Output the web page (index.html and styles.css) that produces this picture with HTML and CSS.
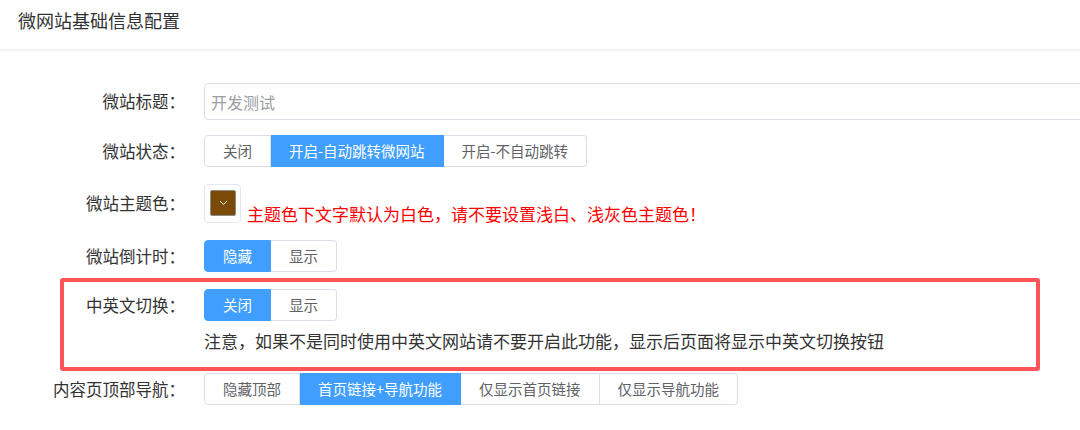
FILE: index.html
```html
<!DOCTYPE html>
<html lang="zh-CN">
<head>
<meta charset="utf-8">
<title>微网站基础信息配置</title>
<link rel="stylesheet" href="styles.css">
</head>
<body>
<div class="page">
  <div class="header">微网站基础信息配置</div>
  <div class="form">
    <div class="row row-input">
      <div class="label">微站标题：</div>
      <div class="control">
        <input class="text-input" type="text" placeholder="开发测试">
      </div>
    </div>
    <div class="row">
      <div class="label">微站状态：</div>
      <div class="control">
        <div class="btn-group">
          <span class="btn">关闭</span>
          <span class="btn active">开启-自动跳转微网站</span>
          <span class="btn">开启-不自动跳转</span>
        </div>
      </div>
    </div>
    <div class="row row-color">
      <div class="label">微站主题色：</div>
      <div class="control control-color">
        <div class="color-picker">
          <div class="swatch">
            <svg class="chev" width="9" height="6" viewBox="0 0 9 6"><path d="M1 1 L4.5 4.5 L8 1" fill="none" stroke="#fff" stroke-width="1"/></svg>
          </div>
        </div>
        <span class="warn">主题色下文字默认为白色，请不要设置浅白、浅灰色主题色！</span>
      </div>
    </div>
    <div class="row row-before-box">
      <div class="label">微站倒计时：</div>
      <div class="control">
        <div class="btn-group">
          <span class="btn active">隐藏</span>
          <span class="btn">显示</span>
        </div>
      </div>
    </div>
    <div class="highlight">
      <div class="row row-inner">
        <div class="label label-inner">中英文切换：</div>
        <div class="control">
          <div class="btn-group">
            <span class="btn active">关闭</span>
            <span class="btn">显示</span>
          </div>
          <div class="note">注意，如果不是同时使用中英文网站请不要开启此功能，显示后页面将显示中英文切换按钮</div>
        </div>
      </div>
    </div>
    <div class="row">
      <div class="label">内容页顶部导航：</div>
      <div class="control">
        <div class="btn-group">
          <span class="btn">隐藏顶部</span>
          <span class="btn active">首页链接+导航功能</span>
          <span class="btn">仅显示首页链接</span>
          <span class="btn">仅显示导航功能</span>
        </div>
      </div>
    </div>
  </div>
</div>
</body>
</html>
```
FILE: styles.css
```css
* { box-sizing: border-box; }
html, body { margin: 0; padding: 0; background: #fff; }
body {
  font-family: "Noto Sans CJK SC", "Noto Sans", sans-serif;
  color: #303133;
  overflow: hidden;
  width: 1080px;
  height: 430px;
}
.header {
  height: 51px;
  padding: 6px 0 0 18px;
  font-size: 18px;
  line-height: 28px;
  color: #303133;
  border-bottom: 2px solid #f3f3f8;
}
.form {
  padding-top: 32px;
}
.row {
  display: flex;
  align-items: flex-start;
  margin-bottom: 17px;
}
.row-input { margin-bottom: 15px; }
.row-before-box { margin-bottom: 6px; }
.label {
  width: 204px;
  flex: none;
  text-align: right;
  padding-right: 19px;
  font-size: 16.5px;
  line-height: 32px;
  color: #333;
  white-space: nowrap;
}
.row-input .label { line-height: 37px; }
.row-color .label { line-height: 39px; }
.control {
  flex: 1;
  min-width: 0;
}
.text-input {
  display: block;
  width: 900px;
  height: 37px;
  border: 1px solid #dcdfe6;
  border-radius: 4px;
  padding: 0 6px;
  font-family: inherit;
  font-size: 16px;
  color: #606266;
  outline: none;
}
.text-input::placeholder { color: #9a9da2; }
.btn-group {
  display: inline-flex;
}
.btn {
  height: 32px;
  line-height: 30px;
  padding: 0 18px;
  font-size: 14.5px;
  color: #606266;
  background: #fff;
  border: 1px solid #dcdfe6;
  border-left: 0;
  white-space: nowrap;
}
.btn:first-child {
  border-left: 1px solid #dcdfe6;
  border-radius: 4px 0 0 4px;
}
.btn:last-child { border-radius: 0 4px 4px 0; }
.btn.active {
  background: #409eff;
  border-color: #409eff;
  color: #fff;
}
.control-color {
  display: flex;
  align-items: flex-end;
}
.color-picker {
  width: 37px;
  height: 39px;
  border: 1px solid #e4e7ed;
  border-radius: 4px;
  padding: 5px 4px 6px 5px;
  flex: none;
}
.swatch {
  width: 26px;
  height: 26px;
  background: #7b4a06;
  border: 1px solid #8a8a8a;
  border-radius: 2px;
  display: flex;
  align-items: center;
  justify-content: center;
}
.warn {
  color: #ff0000;
  font-size: 17px;
  line-height: 20px;
  margin-left: 6px;
  margin-bottom: -1px;
  white-space: nowrap;
}
.highlight {
  margin-left: 60px;
  width: 980px;
  height: 93px;
  border: 4px solid #ff5457;
  border-radius: 3px;
  padding-top: 7px;
  margin-bottom: 2px;
}
.row-inner { margin-bottom: 0; }
.label-inner { width: 140px; }
.note {
  margin-top: 8px;
  font-size: 17px;
  line-height: 24px;
  color: #333;
  white-space: nowrap;
}
```
